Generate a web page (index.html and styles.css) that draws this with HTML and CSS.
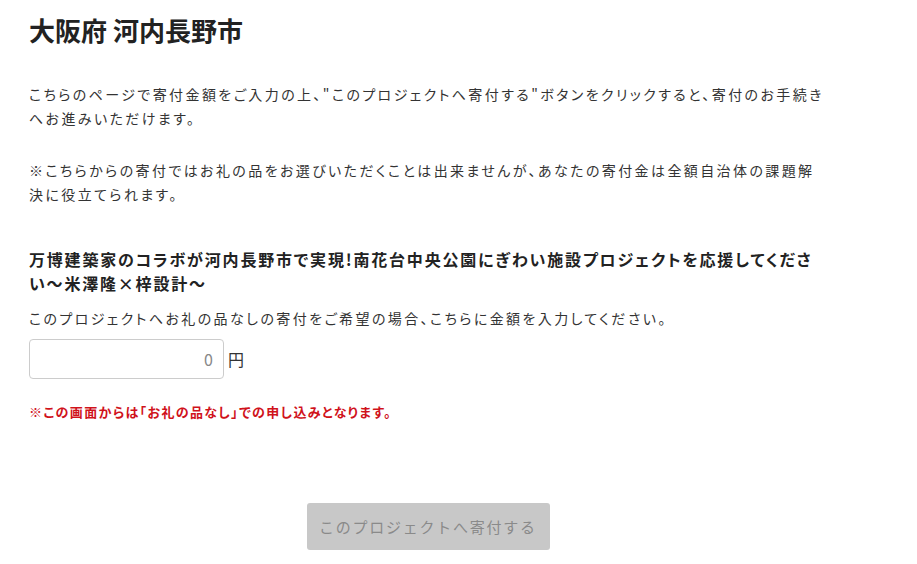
FILE: index.html
```html
<!DOCTYPE html>
<html lang="ja">
<head>
    <meta charset="UTF-8">
    <meta name="viewport" content="width=device-width, initial-scale=1.0">
    <title>大阪府 河内長野市</title>
    <link rel="stylesheet" href="styles.css">
</head>
<body>
    <div class="donate-page">
        <h1 class="city-name">大阪府 河内長野市</h1>

        <p class="lead">こちらのページで寄付金額をご入力の上、"このプロジェクトへ寄付する"ボタンをクリックすると、寄付のお手続きへお進みいただけます。</p>
        <p class="lead">※こちらからの寄付ではお礼の品をお選びいただくことは出来ませんが、あなたの寄付金は全額自治体の課題解決に役立てられます。</p>

        <div class="project">
            <h2 class="project-title">万博建築家のコラボが河内長野市で実現!南花台中央公園にぎわい施設プロジェクトを応援してください～米澤隆×梓設計～</h2>
            <p class="project-note">このプロジェクトへお礼の品なしの寄付をご希望の場合、こちらに金額を入力してください。</p>
            <div class="amount-row">
                <input type="text" class="amount-input" placeholder="0">
                <span class="yen">円</span>
            </div>
            <p class="warning">※この画面からは「お礼の品なし」での申し込みとなります。</p>
        </div>

        <div class="submit-area">
            <button class="submit-button" disabled>このプロジェクトへ寄付する</button>
        </div>
    </div>
</body>
</html>
```

FILE: styles.css
```css
body {
    margin: 0;
    padding: 0;
    background: #ffffff;
    color: #333333;
    font-family: "Noto Sans CJK JP", "Noto Sans", sans-serif;
    font-feature-settings: "palt";
}

.donate-page {
    width: 798px;
    padding: 12px 0 0 29px;
}

.city-name {
    margin: 0 0 34px;
    font-size: 26px;
    line-height: 36px;
    font-weight: bold;
    color: #222222;
}

.lead {
    margin: 0 0 28px;
    font-size: 14px;
    line-height: 24px;
    letter-spacing: 2.4px;
}

.project {
    margin-top: 41px;
}

.project-title {
    margin: 0;
    font-size: 16px;
    line-height: 24px;
    letter-spacing: 1.8px;
    font-weight: bold;
    color: #222222;
}

.project-note {
    margin: 11px 0 8px;
    font-size: 14px;
    line-height: 25px;
    letter-spacing: 2.4px;
}

.amount-row {
    display: flex;
    align-items: center;
    gap: 4px;
}

.amount-input {
    box-sizing: border-box;
    width: 195px;
    height: 40px;
    padding: 0 10px;
    border: 1px solid #cccccc;
    border-radius: 4px;
    font-family: inherit;
    font-size: 16px;
    text-align: right;
    color: #333333;
}

.amount-input::placeholder {
    color: #888888;
}

.yen {
    font-size: 16px;
    color: #333333;
}

.warning {
    margin: 23px 0 0;
    font-size: 13px;
    line-height: 20px;
    letter-spacing: 1.35px;
    font-weight: bold;
    color: #d0121b;
}

.submit-area {
    display: flex;
    justify-content: center;
    margin-top: 81px;
}

.submit-button {
    width: 243px;
    height: 47px;
    border: none;
    border-radius: 3px;
    background: #c8c8c8;
    color: #8a8a8a;
    font-family: inherit;
    font-size: 15px;
    letter-spacing: 1.75px;
}
```
